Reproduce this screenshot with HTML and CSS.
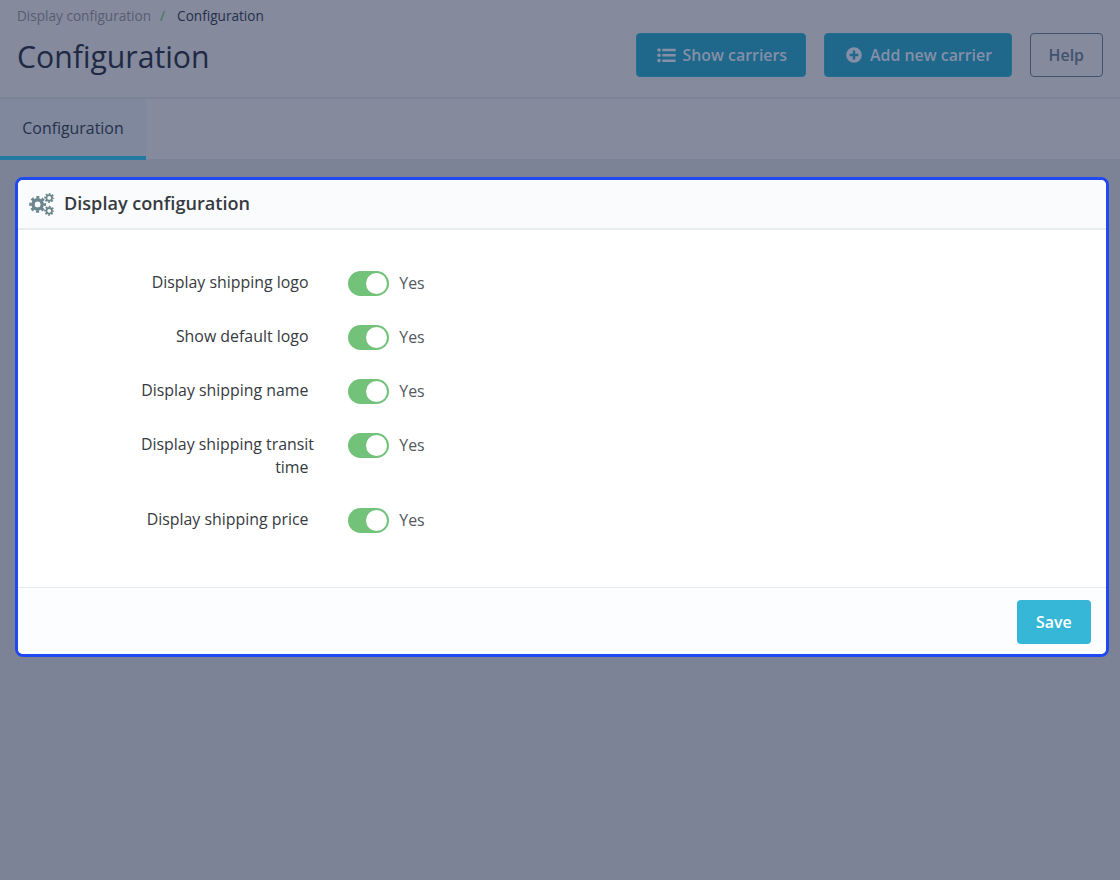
FILE: index.html
```html
<!DOCTYPE html>
<html lang="en">
<head>
    <meta charset="UTF-8">
    <meta name="viewport" content="width=device-width, initial-scale=1.0">
    <title>Configuration</title>
    <link rel="stylesheet" href="styles.css">
</head>
<body>

<header class="page-header">
    <div class="heading">
        <nav class="breadcrumb">
            <span>Display configuration</span>
            <span class="separator">/</span>
            <span class="current">Configuration</span>
        </nav>
        <h1>Configuration</h1>
    </div>
    <div class="toolbar">
        <button type="button" class="btn btn-dim btn-list">
            <svg width="19" height="15" viewBox="0 0 19 15" fill="currentColor">
                <circle cx="2" cy="2" r="1.8"/><circle cx="2" cy="7.3" r="1.8"/><circle cx="2" cy="12.6" r="1.8"/>
                <rect x="5.3" y="0.8" width="13.4" height="2.5" rx="0.5"/>
                <rect x="5.3" y="6.1" width="13.4" height="2.5" rx="0.5"/>
                <rect x="5.3" y="11.4" width="13.4" height="2.5" rx="0.5"/>
            </svg>
            <span>Show carriers</span>
        </button>
        <button type="button" class="btn btn-dim btn-add">
            <svg width="16" height="16" viewBox="0 0 16 16">
                <circle cx="8" cy="8" r="7.8" fill="currentColor"/>
                <path class="plus" d="M8 3.6v8.8M3.6 8h8.8"/>
            </svg>
            <span>Add new carrier</span>
        </button>
        <button type="button" class="btn btn-outline">Help</button>
    </div>
</header>

<nav class="tabs">
    <a class="tab">Configuration</a>
</nav>

<main class="card">
    <div class="card-header">
        <svg class="cogs" width="26" height="24" viewBox="0 0 26 24">
            <circle cx="8.6" cy="12.4" r="4.6" stroke-width="3.4"/>
            <circle cx="8.6" cy="12.4" r="7.1" stroke-width="2.6" stroke-dasharray="3 2.576" stroke-dashoffset="1.5"/>
            <circle cx="20.2" cy="5.9" r="2.8" stroke-width="1.8"/>
            <circle cx="20.2" cy="5.9" r="4.1" stroke-width="1.8" stroke-dasharray="1.7 1.52" stroke-dashoffset="0.85"/>
            <circle cx="20.2" cy="18.8" r="2.8" stroke-width="1.8"/>
            <circle cx="20.2" cy="18.8" r="4.1" stroke-width="1.8" stroke-dasharray="1.7 1.52" stroke-dashoffset="0.85"/>
        </svg>
        <h2>Display configuration</h2>
    </div>

    <form class="card-body">
        <div class="form-row">
            <span class="label">Display shipping logo</span>
            <span class="switch"></span>
            <span class="state">Yes</span>
        </div>
        <div class="form-row">
            <span class="label">Show default logo</span>
            <span class="switch"></span>
            <span class="state">Yes</span>
        </div>
        <div class="form-row">
            <span class="label">Display shipping name</span>
            <span class="switch"></span>
            <span class="state">Yes</span>
        </div>
        <div class="form-row tall">
            <span class="label"><span class="overhang">Display shipping transit</span><br>time</span>
            <span class="switch"></span>
            <span class="state">Yes</span>
        </div>
        <div class="form-row">
            <span class="label">Display shipping price</span>
            <span class="switch"></span>
            <span class="state">Yes</span>
        </div>
    </form>

    <div class="card-footer">
        <button type="button" class="btn btn-save">Save</button>
    </div>
</main>

</body>
</html>
```

FILE: styles.css
```css
* {
    box-sizing: border-box;
}
body {
    margin: 0;
    height: 880px;
    background-color: #7c8397;
    color: #363a41;
    font-family: "Open Sans", sans-serif;
    font-size: 15.9px;
}
h1, h2 {
    margin: 0;
}
.page-header {
    display: flex;
    justify-content: space-between;
    height: 99px;
    padding: 0 17px;
    background-color: #858a9d;
    border-bottom: 2px solid #7b8397;
}
.breadcrumb {
    display: flex;
    padding-top: 6px;
    font-size: 13.6px;
    line-height: 20px;
    color: #575e73;
}
.separator {
    margin: 0 12px 0 9px;
    color: #3f7458;
}
.current {
    color: #26304b;
}
h1 {
    margin-top: 11px;
    font-size: 30.2px;
    font-weight: 400;
    line-height: 40px;
    color: #202944;
}
.toolbar {
    display: flex;
    align-items: flex-start;
    gap: 18px;
    padding-top: 33px;
}
.btn {
    display: flex;
    align-items: center;
    justify-content: center;
    height: 44px;
    padding: 0;
    border: 1px solid transparent;
    border-radius: 4px;
    font-family: inherit;
    font-size: 15.9px;
    font-weight: 600;
    line-height: 22px;
}
.btn-dim {
    background-color: #1f688b;
    border-color: #226d90;
    color: #858fa7;
}
.btn-list {
    width: 169.5px;
    padding-left: 3px;
    gap: 6px;
}
.btn-add {
    width: 188px;
    padding-left: 3px;
    gap: 8px;
}
.plus {
    fill: none;
    stroke: #1f688b;
    stroke-width: 2.4;
}
.btn-outline {
    width: 73.5px;
    background-color: transparent;
    border-color: #41526f;
    color: #41526f;
}
.tabs {
    height: 62px;
    background-color: #858a9d;
    border-bottom: 2px solid #7b8397;
}
.tab {
    display: block;
    width: 146px;
    height: 61px;
    border-bottom: 4px solid #2379a0;
    background-color: #7f889c;
    color: #26304b;
    line-height: 58px;
    text-align: center;
}
.card {
    width: 1094px;
    margin: 16px 0 0 15px;
    border: 3px solid #2149f2;
    border-radius: 8px;
    background-color: #fff;
    overflow: hidden;
}
.card-header {
    display: flex;
    align-items: center;
    gap: 9px;
    height: 50px;
    padding: 0 11px;
    background-color: #fafbfc;
    border-bottom: 2px solid #e8edf0;
}
.cogs {
    fill: none;
    stroke: #6c868e;
}
h2 {
    padding-bottom: 2px;
    font-size: 18.1px;
    font-weight: 600;
    line-height: 24px;
}
.card-body {
    height: 357px;
    padding-top: 40.5px;
}
.form-row {
    display: flex;
    align-items: flex-start;
    height: 54.3px;
}
.form-row.tall {
    height: 74.6px;
}
.label {
    width: 290.5px;
    margin-right: 39.8px;
    text-align: right;
    line-height: 23px;
    white-space: nowrap;
}
.overhang {
    margin-right: -5.5px;
}
.switch {
    display: flex;
    justify-content: flex-end;
    width: 41px;
    height: 25px;
    padding: 2px;
    border-radius: 13px;
    background-color: #72c279;
}
.switch::after {
    content: "";
    width: 21px;
    height: 21px;
    border-radius: 50%;
    background-color: #fff;
}
.state {
    margin-left: 10px;
    line-height: 25px;
    color: #55585d;
}
.card-footer {
    display: flex;
    justify-content: flex-end;
    height: 67px;
    padding: 11.5px 15.5px;
    border-top: 1px solid #eaebec;
    background-color: #fcfdfe;
}
.btn-save {
    width: 73.5px;
    background-color: #37b7d8;
    color: #fff;
}
```
